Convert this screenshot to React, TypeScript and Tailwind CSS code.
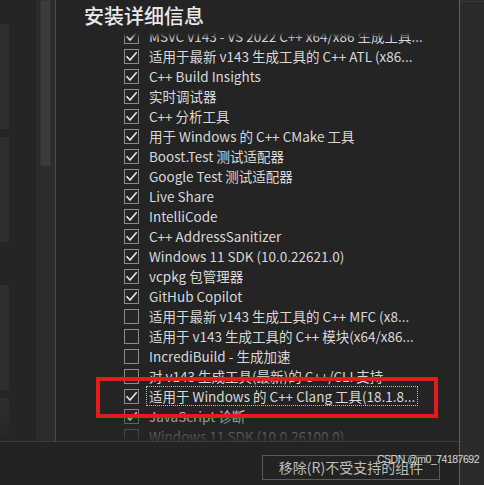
import React from 'react';

type Item = { label: string; checked: boolean; focused?: boolean };

const ITEMS: Item[] = [
  { label: 'MSVC v143 - VS 2022 C++ x64/x86 生成工具...', checked: true },
  { label: '适用于最新 v143 生成工具的 C++ ATL (x86...', checked: true },
  { label: 'C++ Build Insights', checked: true },
  { label: '实时调试器', checked: true },
  { label: 'C++ 分析工具', checked: true },
  { label: '用于 Windows 的 C++ CMake 工具', checked: true },
  { label: 'Boost.Test 测试适配器', checked: true },
  { label: 'Google Test 测试适配器', checked: true },
  { label: 'Live Share', checked: true },
  { label: 'IntelliCode', checked: true },
  { label: 'C++ AddressSanitizer', checked: true },
  { label: 'Windows 11 SDK (10.0.22621.0)', checked: true },
  { label: 'vcpkg 包管理器', checked: true },
  { label: 'GitHub Copilot', checked: true },
  { label: '适用于最新 v143 生成工具的 C++ MFC (x8...', checked: false },
  { label: '适用于 v143 生成工具的 C++ 模块(x64/x86...', checked: false },
  { label: 'IncrediBuild - 生成加速', checked: false },
  { label: '对 v143 生成工具(最新)的 C++/CLI 支持', checked: false },
  { label: '适用于 Windows 的 C++ Clang 工具(18.1.8...', checked: true, focused: true },
  { label: 'JavaScript 诊断', checked: true },
  { label: 'Windows 11 SDK (10.0.26100.0)', checked: false },
];

const CheckBox: React.FC<{ checked: boolean }> = ({ checked }) => (
  <div className="w-[15px] h-[15px] border border-[#8c8c8c] bg-[#262626] flex items-center justify-center shrink-0">
    {checked && (
      <svg width="13" height="13" viewBox="0 0 13 13" fill="none">
        <path d="M2 6.8 L5 10 L11.2 2.8" stroke="#e8e8e8" strokeWidth="1.6" strokeLinecap="square" />
      </svg>
    )}
  </div>
);

const Row: React.FC<{ item: Item }> = ({ item }) => (
  <div className="h-[20px] flex items-center gap-[11px]">
    <CheckBox checked={item.checked} />
    <span
      className={
        'leading-[20px] whitespace-nowrap px-[3px] -ml-[4px] ' +
        (item.focused ? 'outline outline-1 outline-dotted outline-[#bdbdbd] -outline-offset-1' : '')
      }
    >
      {item.label}
    </span>
  </div>
);

export default function App() {
  return (
    <div
      className="relative w-[484px] h-[485px] overflow-hidden bg-[#242424] text-[#d9d9d9] flex"
      style={{ fontFamily: '"Noto Sans CJK SC", "Noto Sans", sans-serif' }}
    >
      <div className="w-[459px] flex flex-col">
        <div className="h-[441px] flex">
          {/* left pane, mostly hidden */}
          <div className="w-[55px] flex bg-[#252525]">
            <div className="w-[36px] flex flex-col">
              <div className="w-[9px] h-[105px] mt-[24px] bg-[#2e2e2e]" />
              <div className="w-[9px] h-[105px] mt-[8px] bg-[#2e2e2e]" />
              <div className="w-[9px] h-[105px] mt-[43px] bg-[#2e2e2e]" />
              <div className="w-[9px] h-[38px] mt-[8px] bg-gradient-to-b from-[#2e2e2e] to-[#272727]" />
            </div>
            <div className="w-[19px] bg-[#2c2c2c] pl-[4px]">
              <div className="w-[11px] h-[166px] bg-[#3b3b3b] border border-[#333]" />
            </div>
          </div>
          <div className="w-px bg-[#4d4d4d]" />
          {/* details */}
          <div className="flex-1 flex flex-col">
            <div className="h-[33px] pl-[28px] text-[20px] leading-[32px] font-medium text-[#e8e8e8]">安装详细信息</div>
            <div className="relative flex-1 overflow-hidden pl-[68px] text-[13.5px]">
              <div className="-mt-[7px]">
                {ITEMS.map((it) => (
                  <Row key={it.label} item={it} />
                ))}
              </div>
              <div className="absolute left-0 right-0 top-0 h-[6px] bg-gradient-to-b from-[#242424] to-transparent" />
              <div className="absolute left-0 right-0 bottom-0 h-[34px] bg-gradient-to-b from-transparent to-[#242424]/90" />
            </div>
          </div>
        </div>
        <div className="h-px bg-[#3c3c3c]" />
        <div className="flex-1 bg-[#232323] pt-[13px] pl-[262px]">
          <div className="w-[178px] h-[25px] border border-[#5a5a5a] flex items-center justify-center text-[14px] text-[#bdbdbd]">
            移除(R)不受支持的组件
          </div>
        </div>
      </div>
      <div className="w-px bg-[#5e5e5e]" />
      <div className="flex-1 bg-[#2b2b2b] pt-px">
        <div className="h-px bg-[#3a3a3a]" />
      </div>

      {/* annotation */}
      <div className="absolute left-[96px] top-[377px] w-[342px] h-[41px] border-[4px] border-[#e11d1b]" />
      <div
        className="absolute left-[377px] top-[453px] text-[10.5px] leading-[13px] tracking-[-0.5px] text-white/80 whitespace-nowrap"
        style={{ fontFamily: '"Liberation Sans", sans-serif' }}
      >
        CSDN @m0_74187692
      </div>
    </div>
  );
}
